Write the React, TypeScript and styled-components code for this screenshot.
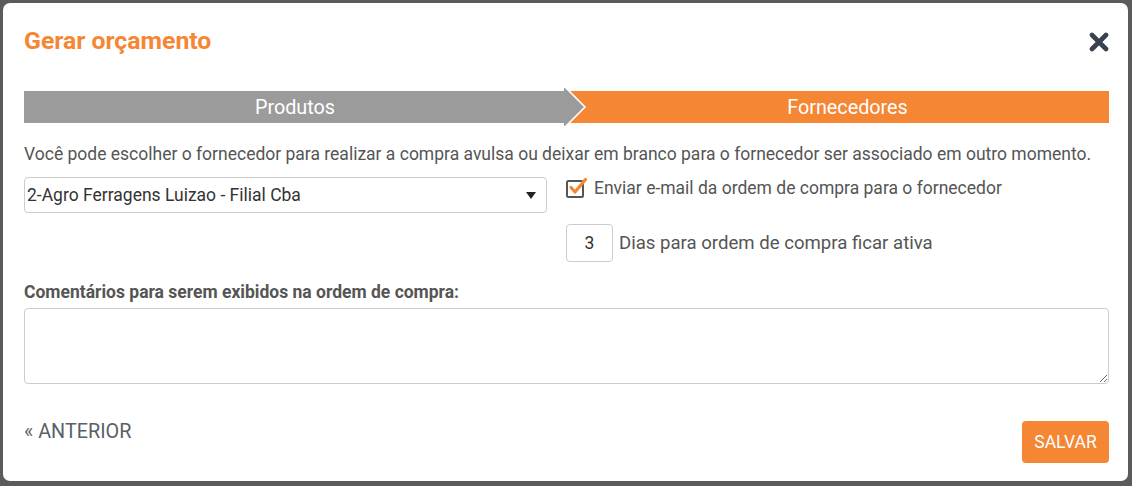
import React from "react";
import styled, { createGlobalStyle } from "styled-components";

const ORANGE = "#f58634";
const TEXT = "#555";

const Global = createGlobalStyle`
  html, body { margin: 0; padding: 0; }
  body { font-family: Roboto, "Liberation Sans", Arial, sans-serif; }
  * { box-sizing: border-box; }
`;

const Backdrop = styled.div`
  width: 1132px;
  height: 486px;
  background: #5b5b5b;
  padding: 3px 4px 5px 3px;
  display: flex;
`;

const Modal = styled.div`
  flex: 1;
  background: #fff;
  border-radius: 7px;
  padding: 0 19px 0 21px;
  display: flex;
  flex-direction: column;
`;

const Header = styled.div`
  height: 74px;
  display: flex;
  align-items: center;
  justify-content: space-between;
`;

const Title = styled.h2`
  margin: 0;
  font-size: 24.8px;
  font-weight: 700;
  color: ${ORANGE};
`;

const Close = styled.button`
  border: 0;
  background: none;
  padding: 0;
  margin-top: 4px;
  width: 20px;
  height: 20px;
  cursor: pointer;
  display: flex;
`;

const Steps = styled.div`
  margin-top: 10px;
  height: 40px;
  display: flex;
  align-items: center;
`;

const Step = styled.div<{ $active?: boolean }>`
  position: relative;
  flex: ${(p) => (p.$active ? "1" : "0 0 542px")};
  height: 32px;
  display: flex;
  align-items: center;
  justify-content: center;
  background: ${(p) => (p.$active ? ORANGE : "#9b9b9b")};
  color: #fff;
  font-size: 19.8px;
  padding-left: ${(p) => (p.$active ? "20px" : "0")};
`;

const StepArrow = styled.svg`
  position: absolute;
  right: -21px;
  top: -4px;
  z-index: 1;
`;

const Description = styled.p`
  margin: 17px 0 0;
  font-size: 17.5px;
  line-height: 20px;
  color: ${TEXT};
  white-space: nowrap;
`;

const FormRow = styled.div`
  margin-top: 13px;
  display: grid;
  grid-template-columns: 523px 1fr;
  column-gap: 19px;
`;

const SelectBox = styled.div`
  height: 36px;
  border: 1px solid #ccc;
  border-radius: 4px;
  display: flex;
  align-items: center;
  justify-content: space-between;
  padding: 0 10px 0 2px;
  font-size: 17.5px;
  color: #333;
`;

const Caret = styled.span`
  width: 0;
  height: 0;
  border-left: 5px solid transparent;
  border-right: 5px solid transparent;
  border-top: 7px solid #222;
`;

const Options = styled.div`
  display: flex;
  flex-direction: column;
`;

const CheckRow = styled.label`
  display: flex;
  align-items: center;
  gap: 6px;
  height: 22px;
  font-size: 17.5px;
  color: ${TEXT};
`;

const DaysRow = styled.div`
  margin-top: 25px;
  display: flex;
  align-items: center;
  gap: 6px;
  font-size: 18.6px;
  color: ${TEXT};
`;

const DaysInput = styled.input`
  width: 47px;
  height: 38px;
  border: 1px solid #ccc;
  border-radius: 4px;
  text-align: center;
  font-family: inherit;
  font-size: 17.5px;
  color: #333;
  padding: 0;
  outline: none;
`;

const CommentLabel = styled.label`
  margin-top: 20px;
  font-size: 17.5px;
  font-weight: 700;
  line-height: 20px;
  color: ${TEXT};
`;

const TextArea = styled.textarea`
  margin-top: 6px;
  height: 76px;
  width: 100%;
  border: 1px solid #ccc;
  border-radius: 4px;
  font-family: inherit;
  font-size: 16px;
  resize: vertical;
  outline: none;
`;

const Footer = styled.div`
  margin-top: 37px;
  display: flex;
  justify-content: space-between;
  align-items: flex-start;
`;

const BackLink = styled.a`
  font-size: 19.8px;
  line-height: 22px;
  color: #5b5f66;
  text-decoration: none;
`;

const SaveButton = styled.button`
  width: 87px;
  height: 42px;
  border: 0;
  border-radius: 4px;
  background: ${ORANGE};
  color: #fff;
  font-family: inherit;
  font-size: 17.5px;
  cursor: pointer;
`;

export default function App() {
  return (
    <>
      <Global />
      <Backdrop>
        <Modal>
          <Header>
            <Title>Gerar orçamento</Title>
            <Close aria-label="Fechar">
              <svg width="20" height="20" viewBox="0 0 20 20">
                <path
                  d="M3 3 L17 17 M17 3 L3 17"
                  stroke="#38434f"
                  strokeWidth="4.6"
                  strokeLinecap="round"
                />
              </svg>
            </Close>
          </Header>

          <Steps>
            <Step>
              Produtos
              <StepArrow width="23" height="40" viewBox="0 0 23 40">
                <path d="M0 1 L1.5 1 L20.5 20 L1.5 39 L0 39 Z" fill="#9b9b9b" />
                <path
                  d="M1.5 0.5 L21 20 L1.5 39.5"
                  fill="none"
                  stroke="#fff"
                  strokeWidth="1.6"
                />
              </StepArrow>
            </Step>
            <Step $active>Fornecedores</Step>
          </Steps>

          <Description>
            Você pode escolher o fornecedor para realizar a compra avulsa ou deixar em branco para o
            fornecedor ser associado em outro momento.
          </Description>

          <FormRow>
            <SelectBox>
              <span>2-Agro Ferragens Luizao - Filial Cba</span>
              <Caret />
            </SelectBox>
            <Options>
              <CheckRow>
                <svg width="22" height="22" viewBox="0 0 22 22">
                  <rect x="1" y="4" width="16" height="16" rx="1.5" fill="none" stroke="#555" strokeWidth="2" />
                  <path
                    d="M5 10.5 L9 15 L19.5 2.5"
                    fill="none"
                    stroke={ORANGE}
                    strokeWidth="3.2"
                    strokeLinecap="round"
                    strokeLinejoin="round"
                  />
                </svg>
                Enviar e-mail da ordem de compra para o fornecedor
              </CheckRow>
              <DaysRow>
                <DaysInput defaultValue="3" />
                Dias para ordem de compra ficar ativa
              </DaysRow>
            </Options>
          </FormRow>

          <CommentLabel>Comentários para serem exibidos na ordem de compra:</CommentLabel>
          <TextArea />

          <Footer>
            <BackLink href="#">« ANTERIOR</BackLink>
            <SaveButton>SALVAR</SaveButton>
          </Footer>
        </Modal>
      </Backdrop>
    </>
  );
}
